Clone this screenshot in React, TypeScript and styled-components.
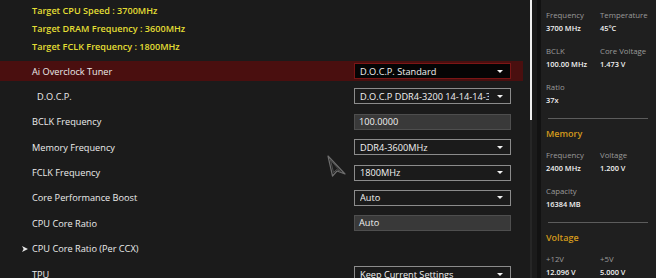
import React from "react"
import styled, { createGlobalStyle } from "styled-components"

const GlobalStyle = createGlobalStyle`
  html, body {
    margin: 0;
    padding: 0;
    background: #1b1b1b;
  }
  body {
    font-family: "Open Sans", "Noto Sans", sans-serif;
  }
`

interface Setting {
  label: string
  value?: string
  kind?: "select" | "input"
  active?: boolean
  indent?: boolean
  sub?: boolean
}

const settings: Array<Setting> = [
  { label: "Ai Overclock Tuner", value: "D.O.C.P. Standard", kind: "select", active: true },
  { label: "D.O.C.P.", value: "D.O.C.P DDR4-3200 14-14-14-34", kind: "select", indent: true },
  { label: "BCLK Frequency", value: "100.0000", kind: "input" },
  { label: "Memory Frequency", value: "DDR4-3600MHz", kind: "select" },
  { label: "FCLK Frequency", value: "1800MHz", kind: "select" },
  { label: "Core Performance Boost", value: "Auto", kind: "select" },
  { label: "CPU Core Ratio", value: "Auto", kind: "input" },
  { label: "CPU Core Ratio (Per CCX)", sub: true },
  { label: "TPU", value: "Keep Current Settings", kind: "select" }
]

const targets = [
  "Target CPU Speed : 3700MHz",
  "Target DRAM Frequency : 3600MHz",
  "Target FCLK Frequency : 1800MHz"
]

const App: React.FC = () => {
  return (
    <Screen>
      <GlobalStyle />
      <Main>
        <Targets>
          {targets.map(t => <Target key={t}>{t}</Target>)}
        </Targets>
        {settings.map(s => (
          <Row key={s.label} $active={s.active}>
            <Label $indent={s.indent}>
              {s.sub && (
                <SubArrow width="6" height="6" viewBox="0 0 6 6">
                  <path d="M0 0 L6 3 L0 6 L1.6 3 Z" fill="#e6e6e6" />
                </SubArrow>
              )}
              {s.label}
            </Label>
            {s.kind === "select" && (
              <Select $active={s.active}>
                <SelectText>{s.value}</SelectText>
                <Caret />
              </Select>
            )}
            {s.kind === "input" && <Input>{s.value}</Input>}
          </Row>
        ))}
        <Cursor width="20" height="22" viewBox="0 0 20 22">
          <path d="M1 1 L18 19 L10 16 L5.5 21 Z" fill="none" stroke="#6e6e6e" strokeWidth="1.2" strokeLinejoin="round" />
          <path d="M3.5 5 L13.5 16.5 L9.5 14.5 L6.5 17.5 Z" fill="none" stroke="#4e4e4e" strokeWidth="1" strokeLinejoin="round" />
        </Cursor>
      </Main>
      <ScrollTrack>
        <ScrollThumb />
      </ScrollTrack>
      <Gutter />
      <Panel>
        <Grid>
          <Stat label="Frequency" value="3700 MHz" />
          <Stat label="Temperature" value="45°C" />
          <Stat label="BCLK" value="100.00 MHz" />
          <Stat label="Core Voltage" value="1.473 V" />
          <Stat label="Ratio" value="37x" />
        </Grid>
        <Divider />
        <Heading>Memory</Heading>
        <Grid>
          <Stat label="Frequency" value="2400 MHz" />
          <Stat label="Voltage" value="1.200 V" />
          <Stat label="Capacity" value="16384 MB" />
        </Grid>
        <Divider />
        <Heading>Voltage</Heading>
        <Grid>
          <Stat label="+12V" value="12.096 V" />
          <Stat label="+5V" value="5.000 V" />
        </Grid>
      </Panel>
    </Screen>
  )
}

const Stat: React.FC<{ label: string; value: string }> = ({ label, value }) => (
  <StatBox>
    <StatLabel>{label}</StatLabel>
    <StatValue>{value}</StatValue>
  </StatBox>
)

const Screen = styled.div`
  width: 656px;
  height: 278px;
  display: flex;
  overflow: hidden;
  background: #1b1b1b;
`

const Main = styled.div`
  position: relative;
  width: 523px;
  flex-shrink: 0;
  padding-top: 2px;
`

const Targets = styled.div`
  display: flex;
  flex-direction: column;
  padding-left: 32px;
  margin-bottom: 5px;
`

const Target = styled.div`
  height: 18px;
  line-height: 18px;
  font-size: 9.1px;
  font-weight: 600;
  color: #e3de34;
`

const Row = styled.div<{ $active?: boolean }>`
  height: 20px;
  margin-bottom: 5.4px;
  display: flex;
  align-items: center;
  padding-left: 32px;
  padding-right: 12px;
  background: ${p => (p.$active ? "#4a0f0f" : "transparent")};
`

const Label = styled.div<{ $indent?: boolean }>`
  flex: 1;
  position: relative;
  font-size: 9.2px;
  font-weight: 500;
  color: #ececec;
  padding-left: ${p => (p.$indent ? "5px" : "0")};
`

const SubArrow = styled.svg`
  position: absolute;
  left: -10px;
  top: 50%;
  margin-top: -3px;
`

const Select = styled.div<{ $active?: boolean }>`
  width: 157px;
  height: 16px;
  box-sizing: border-box;
  display: flex;
  align-items: center;
  padding: 0 7px 0 5px;
  background: ${p => (p.$active ? "#050505" : "#1b1b1b")};
  border: 1px solid ${p => (p.$active ? "#7a1616" : "#8c8c8c")};
`

const SelectText = styled.div`
  flex: 1;
  font-size: 9.2px;
  font-weight: 500;
  color: #f2f2f2;
  white-space: nowrap;
  overflow: hidden;
  margin-right: 8px;
`

const Caret = styled.div`
  width: 0;
  height: 0;
  border-left: 3px solid transparent;
  border-right: 3px solid transparent;
  border-top: 3px solid #f2f2f2;
`

const Input = styled.div`
  width: 157px;
  height: 16px;
  box-sizing: border-box;
  padding-left: 4px;
  line-height: 14px;
  font-size: 9.2px;
  font-weight: 500;
  color: #f0f0f0;
  background: #393939;
  border: 1px solid #4e4e4e;
`

const Cursor = styled.svg`
  position: absolute;
  left: 327px;
  top: 155px;
`

const ScrollTrack = styled.div`
  width: 2px;
  margin-left: 7px;
  margin-right: 5px;
  flex-shrink: 0;
  background: #262626;
`

const ScrollThumb = styled.div`
  height: 120px;
  background: #f0f0f0;
`

const Gutter = styled.div`
  width: 4px;
  flex-shrink: 0;
  background: #121212;
`

const Panel = styled.div`
  flex: 1;
  background: #1f1f1f;
  padding: 9px 10px 0 5px;
  color: #f0f0f0;
`

const Grid = styled.div`
  display: grid;
  grid-template-columns: 54px 1fr;
  row-gap: 10px;
`

const StatBox = styled.div`
  display: flex;
  flex-direction: column;
`

const StatLabel = styled.div`
  font-size: 7.8px;
  line-height: 13px;
  color: #9a9a9a;
`

const StatValue = styled.div`
  font-size: 7.4px;
  line-height: 13px;
  color: #f2f2f2;
  font-weight: 600;
`

const Divider = styled.div`
  height: 1px;
  background: #5c5c5c;
  margin: 11px 0 7px 2px;
`

const Heading = styled.div`
  font-size: 9px;
  font-weight: 600;
  line-height: 16px;
  color: #d39a1c;
  margin-bottom: 7px;
`

export default App
